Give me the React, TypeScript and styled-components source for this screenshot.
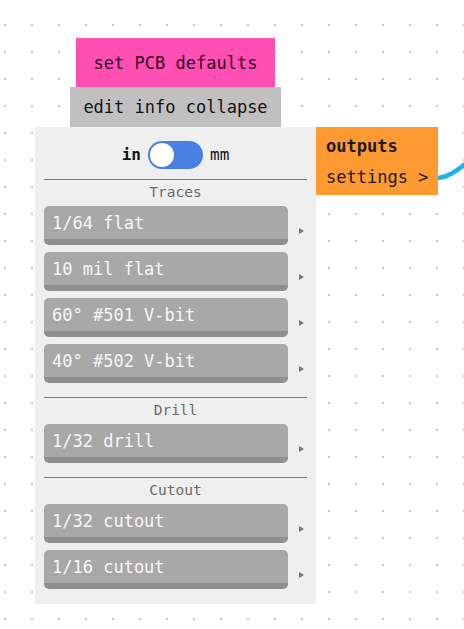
import React, { useState } from 'react';
import styled, { createGlobalStyle } from 'styled-components';

const GlobalStyle = createGlobalStyle`
  html, body {
    margin: 0;
    padding: 0;
  }
  body {
    font-family: "DejaVu Sans Mono", monospace;
    background: #ffffff;
  }
`;

const Canvas = styled.div`
  position: relative;
  width: 464px;
  height: 629px;
  overflow: hidden;
  background-color: #ffffff;
  background-image: radial-gradient(circle at 1px 1px, #c8c8c8 1px, transparent 1.6px);
  background-size: 27px 27px;
  background-position: 4px 24px;
`;

const Wire = styled.svg`
  position: absolute;
  left: 0;
  top: 0;
  pointer-events: none;
`;

const NodeStack = styled.div`
  position: absolute;
  left: 35px;
  top: 38px;
  width: 281px;
  display: flex;
  flex-direction: column;
  align-items: center;
`;

const TagBox = styled.div<{ $bg: string; $w: number; $h: number; $color?: string }>`
  width: ${(p) => p.$w}px;
  height: ${(p) => p.$h}px;
  background: ${(p) => p.$bg};
  color: ${(p) => p.$color || '#111'};
  font-size: 17px;
  display: flex;
  align-items: center;
  justify-content: center;
  box-sizing: border-box;
`;

const Panel = styled.div`
  width: 281px;
  background: #efefef;
  box-sizing: border-box;
  padding: 14px 9px 15px 9px;
  display: flex;
  flex-direction: column;
`;

const ToggleRow = styled.div`
  height: 27px;
  display: flex;
  align-items: center;
  justify-content: center;
  gap: 7px;
  font-size: 16px;
  color: #111;
`;

const UnitLabel = styled.span<{ $bold?: boolean }>`
  font-weight: ${(p) => (p.$bold ? 700 : 400)};
`;

const Track = styled.button<{ $on: boolean }>`
  width: 55px;
  height: 28px;
  border: none;
  padding: 0 2px;
  border-radius: 14px;
  background: #4a80e3;
  display: flex;
  align-items: center;
  justify-content: ${(p) => (p.$on ? 'flex-end' : 'flex-start')};
  cursor: pointer;
`;

const Knob = styled.span`
  width: 24px;
  height: 24px;
  border-radius: 50%;
  background: #ffffff;
`;

const Divider = styled.div`
  height: 1px;
  background: #7a7a7a;
`;

const SectionLabel = styled.div`
  height: 22px;
  line-height: 24px;
  text-align: center;
  font-size: 14.5px;
  color: #6a6a6a;
  margin-bottom: 4px;
`;

const Section = styled.div<{ $first?: boolean }>`
  display: flex;
  flex-direction: column;
  margin-top: ${(p) => (p.$first ? 11 : 14)}px;
`;

const ToolList = styled.div`
  display: flex;
  flex-direction: column;
  gap: 7px;
`;

const ToolRow = styled.div`
  display: flex;
  align-items: center;
`;

const ToolButton = styled.div`
  width: 244px;
  height: 39px;
  box-sizing: border-box;
  border-bottom: 6px solid #8f8f8f;
  border-radius: 5px;
  background: #a8a8a8;
  color: #f7f7f7;
  font-size: 17px;
  padding-left: 8px;
  display: flex;
  align-items: center;
`;

const Arrow = styled.span`
  margin-left: 11px;
  margin-top: 10px;
  width: 0;
  height: 0;
  border-top: 3.5px solid transparent;
  border-bottom: 3.5px solid transparent;
  border-left: 5px solid #777;
`;

const OutputNode = styled.div`
  position: absolute;
  left: 316px;
  top: 127px;
  width: 122px;
  height: 68px;
  background: #ff9a33;
  color: #1a1a1a;
  font-size: 17px;
  line-height: 20px;
  box-sizing: border-box;
  padding: 9px 0 0 10px;
  display: flex;
  flex-direction: column;
  gap: 11px;
`;

const Bold = styled.span`
  font-weight: 700;
`;

const sections = [
  { title: 'Traces', tools: ['1/64 flat', '10 mil flat', '60° #501 V-bit', '40° #502 V-bit'] },
  { title: 'Drill', tools: ['1/32 drill'] },
  { title: 'Cutout', tools: ['1/32 cutout', '1/16 cutout'] },
];

export default function App() {
  const [mm, setMm] = useState(false);
  return (
    <>
      <GlobalStyle />
      <Canvas>
        <Wire width="464" height="629">
          <path d="M438 178 C 447 177, 455 173, 470 160" stroke="#1cb3ef" strokeWidth="4.5" fill="none" />
        </Wire>
        <NodeStack>
          <TagBox $bg="#ff4fb5" $w={199} $h={49} $color="#2a0820">set PCB defaults</TagBox>
          <TagBox $bg="#c0c0c0" $w={211} $h={40}>edit info collapse</TagBox>
          <Panel>
            <ToggleRow>
              <UnitLabel $bold>in</UnitLabel>
              <Track $on={mm} onClick={() => setMm(!mm)}>
                <Knob />
              </Track>
              <UnitLabel>mm</UnitLabel>
            </ToggleRow>
            {sections.map((s, i) => (
              <Section key={s.title} $first={i === 0}>
                <Divider />
                <SectionLabel>{s.title}</SectionLabel>
                <ToolList>
                  {s.tools.map((t) => (
                    <ToolRow key={t}>
                      <ToolButton>{t}</ToolButton>
                      <Arrow />
                    </ToolRow>
                  ))}
                </ToolList>
              </Section>
            ))}
          </Panel>
        </NodeStack>
        <OutputNode>
          <Bold>outputs</Bold>
          <span>settings &gt;</span>
        </OutputNode>
      </Canvas>
    </>
  );
}
